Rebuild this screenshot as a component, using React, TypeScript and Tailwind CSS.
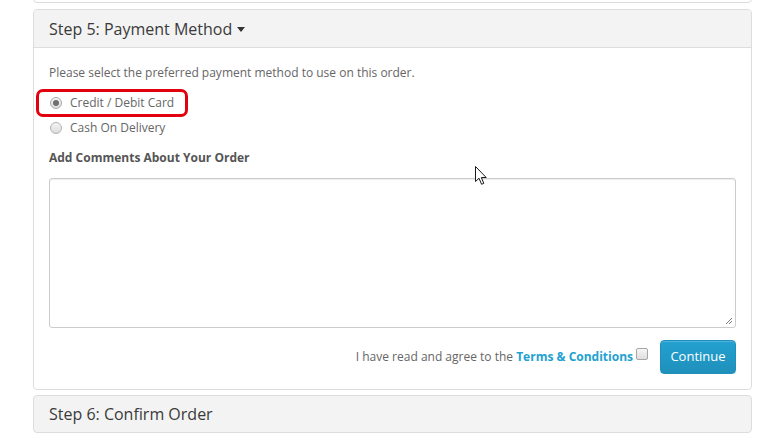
import React from "react";

function Cursor() {
    return (
        <svg
            width="13"
            height="20"
            viewBox="0 0 13 20"
            className="pointer-events-none absolute left-[475px] top-[166px]"
        >
            <path
                d="M0.5 0.5 L0.5 15.5 L4 12.2 L6.6 18.3 L8.8 17.3 L6.3 11.5 L11.2 11.5 Z"
                fill="#fff"
                stroke="#1a1a1a"
                strokeWidth="1"
                strokeLinejoin="round"
            />
        </svg>
    );
}

export default function App() {
    return (
        <div className="relative h-[443px] w-[770px] overflow-hidden bg-white font-['Open_Sans',sans-serif]">
            <div className="flex flex-col px-[33px] pr-[18px]">
                {/* previous step, cut off at the top */}
                <div className="-mt-[20px] h-[23px] rounded-b-[4px] border border-[#ddd] bg-white" />

                {/* Step 5 */}
                <div className="mt-[6px] rounded-[4px] border border-[#ddd] bg-white">
                    <div className="flex h-[38px] items-center rounded-t-[3px] border-b border-[#ddd] bg-[#f3f3f3] px-[15px] text-[16px] text-[#3a3a3a]">
                        Step 5: Payment Method
                        <span className="ml-[5px] mt-[1px] inline-block h-0 w-0 border-x-[4px] border-t-[5px] border-x-transparent border-t-[#333]" />
                    </div>
                    <div className="flex flex-col px-[15px] pb-[15px] pt-[15px] text-[12px] text-[#666]">
                        <p className="leading-[20px]">
                            Please select the preferred payment method to use on this order.
                        </p>
                        <label className="mt-[10px] flex h-[20px] items-center gap-[8px] pl-[1px]">
                            <span className="flex h-[12px] w-[12px] items-center justify-center rounded-full border border-[#a9a9a9] bg-gradient-to-b from-[#f4f4f4] to-[#dcdcdc]">
                                <span className="h-[6px] w-[6px] rounded-full bg-[#6e6e6e]" />
                            </span>
                            Credit / Debit Card
                        </label>
                        <label className="mt-[5px] flex h-[20px] items-center gap-[8px] pl-[1px]">
                            <span className="h-[12px] w-[12px] rounded-full border border-[#b3b3b3] bg-gradient-to-b from-[#f4f4f4] to-[#dcdcdc]" />
                            Cash On Delivery
                        </label>
                        <p className="mt-[10px] font-bold leading-[20px] text-[#555]">
                            Add Comments About Your Order
                        </p>
                        <div className="relative mt-[10px] h-[150px] rounded-[3px] border border-[#ccc] bg-white shadow-[inset_0_1px_1px_rgba(0,0,0,0.075)]">
                            <svg
                                width="8"
                                height="8"
                                viewBox="0 0 8 8"
                                className="absolute bottom-[2px] right-[2px]"
                            >
                                <path d="M7 1 L1 7 M7 4 L4 7" stroke="#777" strokeWidth="1" />
                            </svg>
                        </div>
                        <div className="mt-[12px] flex items-center justify-end gap-[12px]">
                            <div className="flex items-center text-[12px] text-[#666]">
                                <span>I have read and agree to the&nbsp;</span>
                                <span className="font-bold text-[#23a1d1]">Terms &amp; Conditions</span>
                                <span className="-mt-[7px] ml-[3px] h-[12px] w-[12px] rounded-[2px] border border-[#a6a6a6] bg-gradient-to-b from-[#f6f6f6] to-[#dedede]" />
                            </div>
                            <button className="h-[34px] w-[76px] rounded-[4px] border border-[#1f90bb] bg-gradient-to-b from-[#23a1d1] to-[#1f90bb] text-[13px] text-white shadow-[inset_0_1px_0_rgba(255,255,255,0.2)]">
                                Continue
                            </button>
                        </div>
                    </div>
                </div>

                {/* Step 6 */}
                <div className="mt-[5px] flex h-[38px] items-center rounded-[4px] border border-[#ddd] bg-[#f3f3f3] px-[15px] text-[16px] text-[#3a3a3a]">
                    Step 6: Confirm Order
                </div>
            </div>

            {/* red highlight around the chosen option */}
            <div className="pointer-events-none absolute left-[36px] top-[89px] h-[28px] w-[152px] rounded-[7px] border-[3px] border-[#e3000f]" />

            <Cursor />
        </div>
    );
}
